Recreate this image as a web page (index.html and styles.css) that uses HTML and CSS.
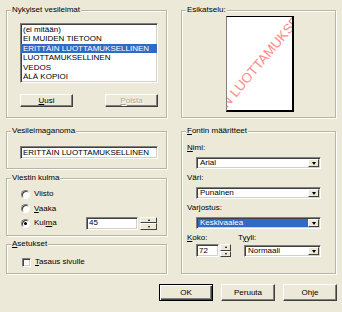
FILE: index.html
```html
<!DOCTYPE html>
<html lang="fi">
<head>
    <meta charset="UTF-8">
    <title>Vesileimat</title>
    <link rel="stylesheet" href="styles.css">
</head>
<body>
    <div class="dialog">
        <div class="columns">
            <!-- Vasen sarake -->
            <div class="col col-left">
                <div class="group g-marks">
                    <span class="group-title">Nykyiset vesileimat</span>
                    <ul class="listbox">
                        <li>(ei mitään)</li>
                        <li>EI MUIDEN TIETOON</li>
                        <li class="selected">ERITTÄIN LUOTTAMUKSELLINEN</li>
                        <li>LUOTTAMUKSELLINEN</li>
                        <li>VEDOS</li>
                        <li>ÄLÄ KOPIOI</li>
                    </ul>
                    <div class="list-buttons">
                        <button class="btn"><u>U</u>usi</button>
                        <button class="btn disabled"><u>P</u>oista</button>
                    </div>
                </div>

                <div class="group g-text">
                    <span class="group-title">Vesileimaganoma</span>
                    <div class="field field-wide">ERITTÄIN LUOTTAMUKSELLINEN</div>
                </div>

                <div class="group g-angle">
                    <span class="group-title">Viestin kulma</span>
                    <div class="radio-row">
                        <span class="choice"><span class="radio"></span>Viisto</span>
                    </div>
                    <div class="radio-row">
                        <span class="choice"><span class="radio"></span><span><u>V</u>aaka</span></span>
                    </div>
                    <div class="radio-row">
                        <span class="choice choice-wide"><span class="radio checked"></span><span>Kul<u>m</u>a</span></span>
                        <div class="field field-angle">45</div>
                        <div class="spinner">
                            <span class="spin-btn"><span class="tri-up"></span></span>
                            <span class="spin-btn"><span class="tri-down"></span></span>
                        </div>
                    </div>
                </div>

                <div class="group g-settings">
                    <span class="group-title"><u>A</u>setukset</span>
                    <div class="check-row">
                        <span class="checkbox"></span>
                        <span><u>T</u>asaus sivulle</span>
                    </div>
                </div>
            </div>

            <!-- Oikea sarake -->
            <div class="col col-right">
                <div class="group g-preview">
                    <span class="group-title">Esikatselu:</span>
                    <div class="page">
                        <span class="watermark">ERITTÄIN LUOTTAMUKSELLINEN</span>
                    </div>
                </div>

                <div class="group g-font">
                    <span class="group-title"><u>F</u>ontin määritteet</span>
                    <div class="label"><u>N</u>imi:</div>
                    <div class="combo">
                        <span class="combo-value">Arial</span>
                        <span class="combo-btn"><span class="tri-down big"></span></span>
                    </div>
                    <div class="label">Väri:</div>
                    <div class="combo">
                        <span class="combo-value">Punainen</span>
                        <span class="combo-btn"><span class="tri-down big"></span></span>
                    </div>
                    <div class="label">Varjostus:</div>
                    <div class="combo selected">
                        <span class="combo-value">Keskivaalea</span>
                        <span class="combo-btn"><span class="tri-down big"></span></span>
                    </div>
                    <div class="size-row">
                        <div class="size-col">
                            <div class="label"><u>K</u>oko:</div>
                            <div class="size-spin">
                                <div class="field field-size">72</div>
                                <div class="spinner spinner-small">
                                    <span class="spin-btn"><span class="tri-up"></span></span>
                                    <span class="spin-btn"><span class="tri-down"></span></span>
                                </div>
                            </div>
                        </div>
                        <div class="style-col">
                            <div class="label">T<u>y</u>yli:</div>
                            <div class="combo combo-style">
                                <span class="combo-value">Normaali</span>
                                <span class="combo-btn"><span class="tri-down big"></span></span>
                            </div>
                        </div>
                    </div>
                </div>
            </div>
        </div>

        <div class="actions">
            <button class="btn btn-main default">OK</button>
            <button class="btn btn-main">Peruuta</button>
            <button class="btn btn-main">Ohje</button>
        </div>
    </div>
</body>
</html>
```

FILE: styles.css
```css
/* Yleiset tyylit */
* {
    box-sizing: border-box;
}

body {
    margin: 0;
    background-color: #ece9d8;
    font-family: "Liberation Sans", Arial, sans-serif;
    font-size: 8px;
    line-height: 10px;
    color: #000;
}

.dialog {
    width: 342px;
    height: 312px;
    padding: 10px 0 0 6px;
}

.columns {
    display: flex;
    gap: 14px;
}

.col {
    display: flex;
    flex-direction: column;
}

.col-left {
    width: 161px;
}

.col-right {
    width: 155px;
}

/* Ryhmäkehykset */
.group {
    position: relative;
    border: 1px solid #b8b5a4;
    box-shadow: inset 1px 1px #fff, 1px 1px #fff;
}

.group-title {
    position: absolute;
    top: -6px;
    left: 4px;
    padding: 0 1px;
    background-color: #ece9d8;
    line-height: 10px;
    white-space: nowrap;
}

.g-marks {
    height: 108px;
    padding: 12px 0 0 13px;
}

.g-text {
    height: 38px;
    margin-top: 13px;
    padding: 14px 0 0 13px;
}

.g-angle {
    height: 58px;
    margin-top: 9px;
    padding: 8px 0 0 14px;
}

.g-settings {
    height: 30px;
    margin-top: 8px;
    padding: 10px 0 0 15px;
}

.g-preview {
    height: 108px;
    padding: 5px 0 0 44px;
}

.g-font {
    height: 143px;
    margin-top: 13px;
    padding: 11px 0 0 5px;
}

/* Upotetut kentät */
.listbox,
.field,
.combo,
.checkbox {
    background-color: #fff;
    border: 1px solid;
    border-color: #808080 #fff #fff #808080;
    box-shadow: inset 1px 1px #404040, inset -1px -1px #d4d0c8;
}

.listbox {
    list-style: none;
    margin: 0;
    padding: 1px 0 0 0;
    width: 138px;
    height: 60px;
    overflow: hidden;
}

.listbox li {
    height: 9.4px;
    line-height: 9.4px;
    padding: 0 2px;
    white-space: nowrap;
}

.listbox li.selected {
    background-color: #316ac5;
    color: #fff;
}

.field {
    display: flex;
    align-items: center;
    height: 13px;
    padding: 0 2px;
    white-space: nowrap;
}

.field-wide {
    width: 138px;
}

.field-angle {
    width: 52px;
}

.field-size {
    width: 23px;
}

/* Painikkeet */
.btn {
    display: flex;
    align-items: center;
    justify-content: center;
    padding: 0;
    font: inherit;
    color: #000;
    background-color: #ece9d8;
    border: 1px solid;
    border-color: #fff #404040 #404040 #fff;
    box-shadow: inset -1px -1px #808080;
}

.list-buttons {
    display: flex;
    justify-content: space-between;
    width: 138px;
    margin-top: 11px;
}

.list-buttons .btn {
    width: 53px;
    height: 13px;
}

.btn.disabled {
    color: #aca899;
    text-shadow: 1px 1px #fff;
}

.actions {
    display: flex;
    justify-content: flex-end;
    gap: 8px;
    margin-top: 10px;
    padding-right: 5px;
}

.btn-main {
    width: 54px;
    height: 17px;
}

.btn.default {
    border: 1px solid #000;
    box-shadow: inset 1px 1px #fff, inset -1px -1px #404040, inset -2px -2px #808080;
}

/* Valintanapit */
.radio-row {
    display: flex;
    align-items: center;
    height: 14.5px;
}

.choice {
    display: flex;
    align-items: center;
    gap: 4px;
}

.choice-wide {
    width: 65px;
}

.radio {
    display: flex;
    align-items: center;
    justify-content: center;
    width: 9px;
    height: 9px;
    border-radius: 50%;
    background-color: #fff;
    border: 1px solid;
    border-color: #808080 #fff #fff #808080;
    box-shadow: inset 1px 1px #404040;
}

.radio.checked::after {
    content: "";
    width: 3px;
    height: 3px;
    border-radius: 50%;
    background-color: #000;
}

.check-row {
    display: flex;
    align-items: center;
    gap: 4px;
    height: 14px;
}

.checkbox {
    width: 9px;
    height: 9px;
}

/* Nuolipainikkeet */
.spinner {
    display: flex;
    flex-direction: column;
    width: 17px;
    height: 13px;
    margin-left: 2px;
}

.spinner-small {
    width: 11px;
    margin-left: 1px;
}

.spin-btn {
    flex: 1;
    display: flex;
    align-items: center;
    justify-content: center;
    background-color: #ece9d8;
    border: 1px solid;
    border-color: #fff #404040 #404040 #fff;
}

.tri-up {
    width: 0;
    height: 0;
    border-left: 1.5px solid transparent;
    border-right: 1.5px solid transparent;
    border-bottom: 2px solid #000;
}

.tri-down {
    width: 0;
    height: 0;
    border-left: 1.5px solid transparent;
    border-right: 1.5px solid transparent;
    border-top: 2px solid #000;
}

.tri-down.big {
    border-left-width: 2.5px;
    border-right-width: 2.5px;
    border-top-width: 3px;
}

/* Esikatselu */
.page {
    display: flex;
    align-items: center;
    justify-content: center;
    width: 68px;
    height: 96px;
    background-color: #fff;
    border: 1px solid #000;
    border-left-color: #808080;
    border-right-width: 2px;
    border-bottom-width: 2px;
    overflow: hidden;
}

.watermark {
    white-space: nowrap;
    font-size: 13.5px;
    color: #ff8a8a;
    transform: rotate(-50deg);
}

/* Fontin määritteet */
.label {
    height: 10px;
    line-height: 10px;
}

.combo {
    display: flex;
    width: 125px;
    height: 12px;
    margin: 4px 0 4px 9px;
    padding: 1px;
}

.combo-value {
    flex: 1;
    padding-left: 2px;
    line-height: 8px;
    white-space: nowrap;
}

.combo.selected .combo-value {
    background-color: #316ac5;
    color: #fff;
}

.combo-btn {
    display: flex;
    align-items: center;
    justify-content: center;
    width: 11px;
    background-color: #ece9d8;
    border: 1px solid;
    border-color: #fff #404040 #404040 #fff;
}

.size-row {
    display: flex;
    margin-top: 3px;
}

.size-col {
    width: 51px;
}

.size-spin {
    display: flex;
    margin: 1px 0 0 9px;
}

.combo.combo-style {
    width: 77px;
    margin: 2px 0 0 6px;
}
```
